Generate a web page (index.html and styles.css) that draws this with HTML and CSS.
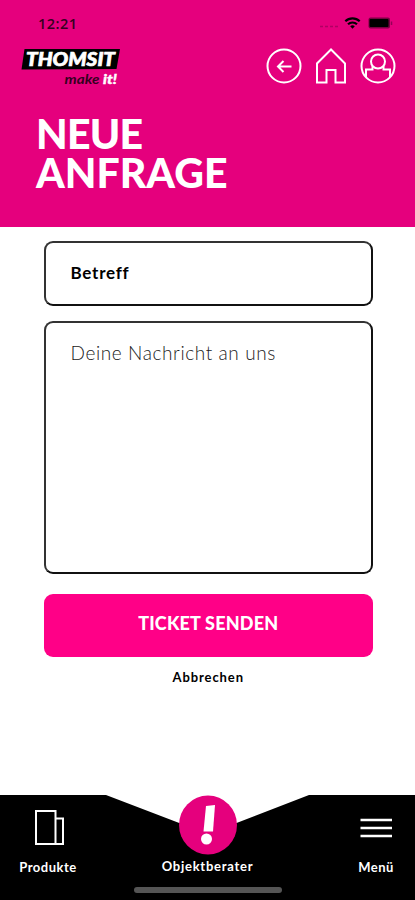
FILE: index.html
```html
<!DOCTYPE html>
<html lang="de">
<head>
<meta charset="utf-8">
<meta name="viewport" content="width=device-width, initial-scale=1">
<title>Neue Anfrage</title>
<link rel="stylesheet" href="styles.css">
</head>
<body>
<div class="app">
  <header class="header">
    <div class="status">
      <span class="clock">12:21</span>
      <svg class="signals" width="76" height="16" viewBox="0 0 76 16">
        <path d="M1 11.5h18" stroke="#b00064" stroke-width="1.5" stroke-dasharray="3 2"/>
        <g fill="none" stroke="#000" stroke-width="2.2">
          <path d="M26.300 6.300a10.500 10.500 0 0 1 14.400 0"/>
          <path d="M29 9.300a6.500 6.500 0 0 1 9 0"/>
        </g>
        <path d="M31.200 11.200a3.500 3.500 0 0 1 4.600 0l-2.300 2.500z"/>
        <rect x="49.500" y="2.500" width="21.500" height="11" rx="2" fill="#7a0043"/>
        <rect x="50.500" y="4" width="19" height="8" rx="1"/>
        <path d="M72.500 6.500v3.500" stroke="#940058" stroke-width="1.500"/>
      </svg>
    </div>
    <div class="toolbar">
      <svg class="logo" width="102" height="40" viewBox="0 0 102 40">
        <path d="M3.500 1H99l-3.500 20L.5 21.500z"/>
        <text class="logo-name" x="5" y="17.500" textLength="89" lengthAdjust="spacingAndGlyphs">THOMSIT</text>
        <text class="logo-make" x="43.500" y="36" textLength="35" lengthAdjust="spacingAndGlyphs">make</text>
        <text class="logo-it" x="82" y="36" textLength="14" lengthAdjust="spacingAndGlyphs">it!</text>
      </svg>
      <nav class="actions">
        <svg width="36" height="36" viewBox="0 0 36 36"><circle cx="18" cy="18" r="16.500"/><path d="M25.500 18.500h-13M17.500 13l-5.500 5.500 5.500 5.500"/></svg>
        <svg width="32" height="36" viewBox="0 0 32 36"><path d="M16 1.500L2 15.500v19h9.500V22h9v12.500H30v-19z"/></svg>
        <svg width="36" height="36" viewBox="0 0 36 36"><circle cx="18" cy="18" r="16.500"/><circle cx="18" cy="13.500" r="7"/><path d="M6 29v-7.500h6.500V18M30 29v-7.500h-6.500V18"/></svg>
      </nav>
    </div>
    <h1 class="title"><span class="title-a">NEUE</span> <span class="title-b">ANFRAGE</span></h1>
  </header>
  <main class="form">
    <div class="field subject"><span>Betreff</span></div>
    <div class="field message"><span>Deine Nachricht an uns</span></div>
    <div class="submit"><span>TICKET SENDEN</span></div>
    <div class="cancel"><span>Abbrechen</span></div>
  </main>
  <footer class="tabs">
    <svg class="tabs-shape" width="415" height="105" viewBox="0 0 415 105">
      <path d="M0 0h106l102 39L309 0h106v105H0z"/>
    </svg>
    <div class="tab products">
      <svg width="32" height="38" viewBox="0 0 32 38"><path d="M4 2h19.500v33H4zM23.500 9.500h7.500V35h-7.500z"/></svg>
      <span>Produkte</span>
    </div>
    <div class="tab adviser">
      <svg width="58" height="60" viewBox="0 0 58 60"><ellipse cx="29" cy="30" rx="29" ry="29.500"/><path class="mark" d="M27 11L36 10l-2 26.500h-9.500z"/><circle class="mark" cx="27.500" cy="44" r="5.500"/></svg>
      <span>Objektberater</span>
    </div>
    <div class="tab menu">
      <svg width="32" height="38" viewBox="0 0 32 38"><path d="M.5 11H32M.5 19H32M.5 27H32"/></svg>
      <span>Menü</span>
    </div>
    <div class="home-bar"></div>
  </footer>
</div>
</body>
</html>
```
FILE: styles.css
```css
* { box-sizing: border-box; }
body { margin: 0; background: #fff; font-family: Lato, sans-serif; color: #000; }
.app { width: 415px; height: 900px; display: flex; flex-direction: column; overflow: hidden; }
.header { height: 227px; background: #e5007d; flex: none; }
.status { height: 46px; padding: 15px 20px 0 38px; display: flex; justify-content: space-between; align-items: flex-start; }
.clock { font: 600 14.500px/17px "Open Sans", sans-serif; color: #35001f; letter-spacing: .5px; }
.toolbar { height: 48px; padding: 2px 19px 0 21px; display: flex; justify-content: space-between; }
.logo-name { font: italic 900 19px Lato, sans-serif; fill: #fff; stroke: #fff; stroke-width: .7px; }
.logo-make { font: italic 700 13px Lato, sans-serif; fill: #35001f; }
.logo-it { font: italic 900 14px Lato, sans-serif; fill: #fff; stroke: #fff; stroke-width: .4px; }
.actions { display: flex; gap: 13px; }
.actions svg { fill: none; stroke: #fff; stroke-width: 2px; }
.title { margin: 20px 0 0 36px; color: #fff; font: 900 41px/39px Lato, sans-serif; white-space: nowrap; }
.title span { display: block; height: 39px; }
.title-a { letter-spacing: -.8px; }
.form { flex: 1; padding: 13.500px 42px 0 43.500px; }
.field { border: 2px solid; border-color: #333 #111 #111 #333; border-radius: 9px; padding-left: 25px; background: #fff; }
.subject { height: 65px; margin-bottom: 15.500px; font-size: 17px; font-weight: 700; line-height: 59px; letter-spacing: .75px; }
.message { height: 253px; margin-bottom: 19.500px; padding-top: 18px; font-size: 19px; font-weight: 300; line-height: 24px; letter-spacing: .6px; color: #222; }
.submit { height: 63px; border-radius: 9px; background: #ff0087; color: #fff; text-align: center; font-size: 18px; font-weight: 900; line-height: 59px; letter-spacing: .18px; }
.cancel { margin-top: 12px; text-align: center; font-size: 13px; font-weight: 700; line-height: 17px; letter-spacing: .9px; }
.tabs { position: relative; height: 105px; flex: none; display: grid; grid-template-columns: 58px 1fr 36px; padding: 0 21px 0 19px; color: #fff; }
.tabs-shape { position: absolute; inset: 0; }
.tab { position: relative; display: flex; flex-direction: column; align-items: center; font-size: 13px; font-weight: 700; line-height: 16px; letter-spacing: .5px; }
.tab svg { fill: none; stroke: #fff; stroke-width: 2px; }
.products, .menu { padding-top: 14px; gap: 12px; }
.adviser { gap: 3px; padding-right: 20px; letter-spacing: .75px; }
.adviser svg { fill: #e5007d; stroke: none; }
.adviser .mark { fill: #fff; }
.menu svg { stroke-width: 2.500px; }
.home-bar { position: absolute; left: 134px; bottom: 7px; width: 148px; height: 6px; border-radius: 3px; background: #555; }
```
